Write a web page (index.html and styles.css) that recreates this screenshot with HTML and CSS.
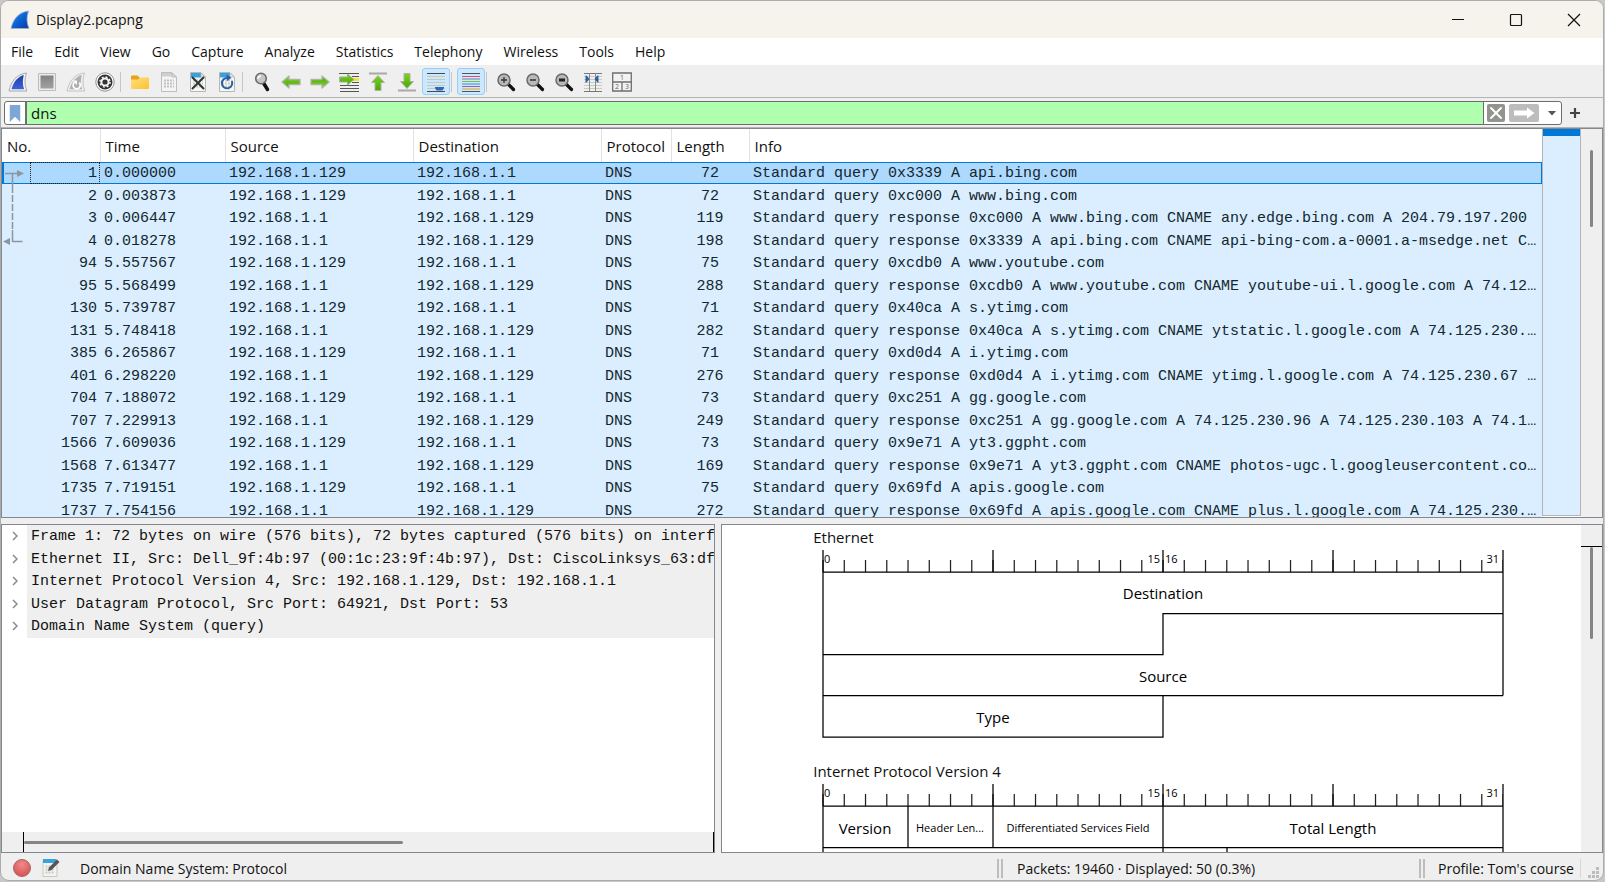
FILE: index.html
```html
<!DOCTYPE html>
<html lang="en">
<head>
  <meta charset="UTF-8" />
  <meta name="viewport" content="width=device-width, initial-scale=1" />
  <title>Display2.pcapng</title>
  <link rel="stylesheet" href="styles.css">
</head>
<body>

<!-- shared icon parts -->
<svg class="defs" aria-hidden="true">
  <defs>
    <linearGradient id="fin-blue" x1="0" y1="0" x2="1" y2="1">
      <stop offset="0" stop-color="#2a9bf2" />
      <stop offset="0.5" stop-color="#0a62d6" />
      <stop offset="1" stop-color="#083a9c" />
    </linearGradient>
    <linearGradient id="fin-navy" x1="0" y1="0" x2="0" y2="1">
      <stop offset="0" stop-color="#1d3fa8" />
      <stop offset="1" stop-color="#3f63d8" />
    </linearGradient>
    <linearGradient id="green" x1="0" y1="0" x2="0" y2="1">
      <stop offset="0" stop-color="#7ed321" />
      <stop offset="1" stop-color="#4aa505" />
    </linearGradient>
    <linearGradient id="yellow" x1="0" y1="0" x2="1" y2="1">
      <stop offset="0" stop-color="#ffdf83" />
      <stop offset="1" stop-color="#fcc22d" />
    </linearGradient>
    <linearGradient id="gray" x1="0" y1="0" x2="0" y2="1">
      <stop offset="0" stop-color="#828282" />
      <stop offset="1" stop-color="#a2a2a2" />
    </linearGradient>
    <radialGradient id="red" cx="0.5" cy="0.3" r="0.7">
      <stop offset="0" stop-color="#f08a8a" />
      <stop offset="1" stop-color="#d94f4f" />
    </radialGradient>
    <symbol id="page" viewBox="0 0 20 20">
      <path d="M2.500.5h10.500l4.500 4.500v14.500h-15z" fill="#f7f7f2" stroke="#b4b8b4" />
      <path d="M3 1h10v4.500H3z" fill="#36a3de" />
      <path d="M13 1v4h4z" fill="#e4e6e2" stroke="#b4b8b4" stroke-width=".7" />
      <path d="M5 8.500h10M5 11.500h10M5 14.500h10" stroke="#c9ccc9" stroke-width="2" stroke-dasharray="2 1" />
    </symbol>
    <symbol id="lens" viewBox="0 0 20 20">
      <path d="M12 12l5.500 5.500" stroke="#111" stroke-width="3.200" stroke-linecap="round" />
      <circle cx="8" cy="8" r="6" fill="#b9b9b9" stroke="#6a6a6a" stroke-width="1.500" />
    </symbol>
    <symbol id="arrow" viewBox="0 0 20 20">
      <path d="M1 10l7-6v3.500h11v5H8V16z" fill="url(#green)" stroke="#aab6a2" stroke-width="1.300" stroke-linejoin="round" />
    </symbol>
  </defs>
</svg>

<div class="window">
  <header class="titlebar">
    <svg class="app-icon" viewBox="0 0 20 20"><path d="M1 18.500C3 9 9 2 18.500 1c-2 6-2 11.500.5 17.500z" fill="url(#fin-blue)" stroke="#9fb4c8" stroke-width=".8" /></svg>
    <h1 class="title">Display2.pcapng</h1>
    <div class="window-buttons">
      <button aria-label="Minimize"><svg viewBox="0 0 14 14"><path d="M1 6.500h12" /></svg></button>
      <button aria-label="Maximize"><svg viewBox="0 0 14 14"><rect x="1.500" y="1.500" width="11" height="11" rx="1" /></svg></button>
      <button aria-label="Close"><svg viewBox="0 0 14 14"><path d="M1 1l12 12M13 1L1 13" /></svg></button>
    </div>
  </header>

  <nav class="menubar">
    <button>File</button>
    <button>Edit</button>
    <button>View</button>
    <button>Go</button>
    <button>Capture</button>
    <button>Analyze</button>
    <button>Statistics</button>
    <button>Telephony</button>
    <button>Wireless</button>
    <button>Tools</button>
    <button>Help</button>
  </nav>

  <div class="toolbar">
    <button aria-label="Start capture"><svg viewBox="0 0 20 20"><path d="M1 19C3 9 9 2 18.500 1c-2 6-2 12 .3 18z" fill="#f4f4f4" stroke="#a9a9a9" /><path d="M3.500 17.300C5.500 10 9.500 4.800 15.800 3c-1.300 5-1.300 9.500.3 14.300z" fill="url(#fin-navy)" /></svg></button>
    <button aria-label="Stop capture"><svg viewBox="0 0 20 20"><path d="M1.500 1.500h17v17h-17z" fill="#ececec" stroke="#bcbcbc" /><path d="M3.500 3.500h13v13h-13z" fill="url(#gray)" /></svg></button>
    <button aria-label="Restart capture"><svg viewBox="0 0 20 20"><path d="M1 19C3 9 9 2 18.500 1c-2 6-2 12 .3 18z" fill="#efefef" stroke="#c3c3c3" /><path d="M3.500 17.300C5.500 10 9.500 4.800 15.800 3c-1.300 5-1.300 9.500.3 14.300z" fill="#b0b0b0" /><path d="M8.300 10.500a3.600 3.600 0 1 0 5 .2" fill="none" stroke="#fff" stroke-width="1.700" /><path d="M6.500 8.500h4.500V13z" fill="#fff" /></svg></button>
    <button aria-label="Capture options"><svg viewBox="0 0 20 20"><circle cx="10" cy="10" r="9.200" fill="#fff" stroke="#8c8c8c" /><circle cx="10" cy="10" r="7.500" fill="#333" /><circle cx="10" cy="10" r="3.600" fill="none" stroke="#f4f4f4" stroke-width="2" /><circle cx="10" cy="10" r="5.100" fill="none" stroke="#f4f4f4" stroke-width="1.400" stroke-dasharray="2 2" /></svg></button>
    <span class="sep"></span>
    <button aria-label="Open file"><svg viewBox="0 0 20 20"><path d="M1 4.500q0-1 1-1h5.500l2 2V9H1z" fill="#e8a21c" /><path d="M1 7.500h7l2-2h8q1 0 1 1V16q0 1-1 1H2q-1 0-1-1z" fill="url(#yellow)" /></svg></button>
    <button aria-label="Save file"><svg viewBox="0 0 20 20"><path d="M2.500.5h10.500l4.500 4.500v14.500h-15z" fill="#f4f4f4" stroke="#bdbdbd" /><path d="M3 1h10v3.500H3z" fill="#cfcfcf" /><path d="M13 1v4h4z" fill="#ddd" stroke="#bdbdbd" /><path d="M5 8.500h10M5 11.500h10M5 14.500h10" stroke="#c2c2c2" stroke-width="2" stroke-dasharray="2 1" /></svg></button>
    <button aria-label="Close file"><svg viewBox="0 0 20 20"><use href="#page" /><path d="M4.500 5.500l11 11M15.500 5.500l-11 11" stroke="#2d3436" stroke-width="2" stroke-linecap="round" /></svg></button>
    <button aria-label="Reload file"><svg viewBox="0 0 20 20"><use href="#page" /><path d="M14.800 9a5.200 5.200 0 1 1-4-3" fill="none" stroke="#2c5fa5" stroke-width="2" /><path d="M9.500 2.500l5 3.300-4.500 3.500z" fill="#2c5fa5" /></svg></button>
    <span class="sep"></span>
    <button aria-label="Find packet"><svg viewBox="0 0 20 20"><path d="M11.500 11l4 6.500" stroke="#111" stroke-width="3.500" stroke-linecap="round" /><circle cx="9" cy="6.500" r="5.300" fill="#c6c6c6" stroke="#6d6d6d" stroke-width="1.600" /><path d="M6 7a3 3 0 0 1 3-3" fill="none" stroke="#fff" stroke-width="1.300" /></svg></button>
    <button aria-label="Previous packet"><svg viewBox="0 0 20 20"><use href="#arrow" /></svg></button>
    <button aria-label="Next packet"><svg viewBox="0 0 20 20"><use href="#arrow" transform="rotate(180 10 10)" /></svg></button>
    <button aria-label="Go to packet"><svg viewBox="0 0 20 20"><path d="M0 1.500h20M1 13.500h19M1 16.500h19M1 19.500h19" stroke="#555" /><path d="M13 4.500h7M13 10.500h7" stroke="#555" /><path d="M13 7.500h7" stroke="#f4e23c" stroke-width="3" /><path d="M15 7.500L8.500 2v3H.7v5h7.800v3z" fill="url(#green)" stroke="#9fb08f" /></svg></button>
    <button aria-label="First packet"><svg viewBox="0 0 20 20"><path d="M1 1.500h18" stroke="#a9a9a9" stroke-width="2" /><path d="M10 3.500l6.500 7H13v8H7v-8H3.500z" fill="url(#green)" stroke="#a9b59f" /></svg></button>
    <button aria-label="Last packet"><svg viewBox="0 0 20 20"><path d="M1 18.500h18" stroke="#a9a9a9" stroke-width="2" /><path d="M10 16.500l6.500-7H13v-8H7v8H3.500z" fill="url(#green)" stroke="#a9b59f" /></svg></button>
    <button class="active" aria-label="Auto scroll"><svg viewBox="0 0 20 20"><path d="M1 1.500h18M1 19.500h18" stroke="#4a4a4a" /><path d="M1 4.500h18M1 7.500h18M1 10.500h18M1 13.500h18M1 16.500h18" stroke="#c2c8bb" /><path d="M9 15h9v1l-1.500 2.500h-6L9 16z" fill="#2f66b5" /></svg></button>
    <span class="sep"></span>
    <button class="active" aria-label="Colorize packets"><svg viewBox="0 0 20 20"><path d="M1 1.500h18M1 19.500h18" stroke="#555" /><path d="M1 4.500h18" stroke="#f04c4c" /><path d="M1 7h18" stroke="#5b83c4" /><path d="M1 9.500h18" stroke="#76c442" /><path d="M1 12h18" stroke="#5b83c4" /><path d="M1 14.500h18" stroke="#8a6ba8" /><path d="M1 17h18" stroke="#d9a92a" /></svg></button>
    <span class="sep"></span>
    <button aria-label="Zoom in"><svg viewBox="0 0 20 20"><use href="#lens" /><path d="M5 8h6M8 5v6" stroke="#333" stroke-width="1.300" /></svg></button>
    <button aria-label="Zoom out"><svg viewBox="0 0 20 20"><use href="#lens" /><path d="M5 8h6" stroke="#333" stroke-width="1.300" /></svg></button>
    <button aria-label="Normal size"><svg viewBox="0 0 20 20"><use href="#lens" /><path d="M5 8h6" stroke="#222" stroke-width="2.800" /></svg></button>
    <button aria-label="Resize columns"><svg viewBox="0 0 20 20"><path d="M1 1.500h18M1 19.500h18" stroke="#777" /><path d="M1 4.500h18M1 7.500h18M1 10.500h18M1 13.500h18M1 16.500h18" stroke="#c6ccc0" /><path d="M6.500 1v18M12.500 1v18" stroke="#8c8c8c" /><path d="M2.500 3.500h1l3 3.500-3 3.500h-1zM15.500 3.500h-1l-3 3.500 3 3.500h1z" fill="#2b5fae" /></svg></button>
    <button aria-label="Pane layout"><svg viewBox="0 0 20 20"><path d="M.7 1h18.600v18H.7zM.7 10h18.600M10 10v9" fill="#f2f2f2" stroke="#6e6e6e" stroke-width="1.300" /><text x="10" y="8" class="tiny">1</text><text x="5" y="17" class="tiny">2</text><text x="15" y="17" class="tiny">3</text></svg></button>
  </div>

  <div class="filterbar">
    <div class="filter">
      <button class="bookmark" aria-label="Saved filters"><svg viewBox="0 0 12 20"><path d="M.5 1h11v18L6 13.500.5 19z" fill="#7ea6d6" /></svg></button>
      <input type="text" value="dns" aria-label="Display filter">
      <button class="clear" aria-label="Clear filter"><svg viewBox="0 0 18 18"><path d="M4 4l10 10M14 4L4 14" stroke="#fff" stroke-width="2" stroke-linecap="round" /></svg></button>
      <button class="apply" aria-label="Apply filter"><svg viewBox="0 0 30 18"><path d="M5 6.500h13V3.500l7.500 5.500-7.500 5.500v-3H5z" fill="#fff" /></svg></button>
      <button class="history" aria-label="Recent filters"><svg viewBox="0 0 8 5"><path d="M0 0h8L4 4.500z" fill="#555" /></svg></button>
    </div>
    <button class="add" aria-label="Add filter button"><svg viewBox="0 0 10 10"><path d="M5 0v10M0 5h10" stroke="#444" stroke-width="2.200" /></svg></button>
  </div>

  <main class="panes">
    <section class="pane packet-list">
      <div class="packets">
        <table>
          <colgroup>
            <col class="c-no"><col class="c-time"><col class="c-addr"><col class="c-addr"><col class="c-proto"><col class="c-len"><col>
          </colgroup>
          <thead>
            <tr><th>No.</th><th>Time</th><th>Source</th><th>Destination</th><th>Protocol</th><th>Length</th><th>Info</th></tr>
          </thead>
          <tbody>
            <tr class="selected"><td>1</td><td>0.000000</td><td>192.168.1.129</td><td>192.168.1.1</td><td>DNS</td><td>72</td><td>Standard query 0x3339 A api.bing.com</td></tr>
            <tr><td>2</td><td>0.003873</td><td>192.168.1.129</td><td>192.168.1.1</td><td>DNS</td><td>72</td><td>Standard query 0xc000 A www.bing.com</td></tr>
            <tr><td>3</td><td>0.006447</td><td>192.168.1.1</td><td>192.168.1.129</td><td>DNS</td><td>119</td><td>Standard query response 0xc000 A www.bing.com CNAME any.edge.bing.com A 204.79.197.200</td></tr>
            <tr><td>4</td><td>0.018278</td><td>192.168.1.1</td><td>192.168.1.129</td><td>DNS</td><td>198</td><td>Standard query response 0x3339 A api.bing.com CNAME api-bing-com.a-0001.a-msedge.net C…</td></tr>
            <tr><td>94</td><td>5.557567</td><td>192.168.1.129</td><td>192.168.1.1</td><td>DNS</td><td>75</td><td>Standard query 0xcdb0 A www.youtube.com</td></tr>
            <tr><td>95</td><td>5.568499</td><td>192.168.1.1</td><td>192.168.1.129</td><td>DNS</td><td>288</td><td>Standard query response 0xcdb0 A www.youtube.com CNAME youtube-ui.l.google.com A 74.12…</td></tr>
            <tr><td>130</td><td>5.739787</td><td>192.168.1.129</td><td>192.168.1.1</td><td>DNS</td><td>71</td><td>Standard query 0x40ca A s.ytimg.com</td></tr>
            <tr><td>131</td><td>5.748418</td><td>192.168.1.1</td><td>192.168.1.129</td><td>DNS</td><td>282</td><td>Standard query response 0x40ca A s.ytimg.com CNAME ytstatic.l.google.com A 74.125.230.…</td></tr>
            <tr><td>385</td><td>6.265867</td><td>192.168.1.129</td><td>192.168.1.1</td><td>DNS</td><td>71</td><td>Standard query 0xd0d4 A i.ytimg.com</td></tr>
            <tr><td>401</td><td>6.298220</td><td>192.168.1.1</td><td>192.168.1.129</td><td>DNS</td><td>276</td><td>Standard query response 0xd0d4 A i.ytimg.com CNAME ytimg.l.google.com A 74.125.230.67 …</td></tr>
            <tr><td>704</td><td>7.188072</td><td>192.168.1.129</td><td>192.168.1.1</td><td>DNS</td><td>73</td><td>Standard query 0xc251 A gg.google.com</td></tr>
            <tr><td>707</td><td>7.229913</td><td>192.168.1.1</td><td>192.168.1.129</td><td>DNS</td><td>249</td><td>Standard query response 0xc251 A gg.google.com A 74.125.230.96 A 74.125.230.103 A 74.1…</td></tr>
            <tr><td>1566</td><td>7.609036</td><td>192.168.1.129</td><td>192.168.1.1</td><td>DNS</td><td>73</td><td>Standard query 0x9e71 A yt3.ggpht.com</td></tr>
            <tr><td>1568</td><td>7.613477</td><td>192.168.1.1</td><td>192.168.1.129</td><td>DNS</td><td>169</td><td>Standard query response 0x9e71 A yt3.ggpht.com CNAME photos-ugc.l.googleusercontent.co…</td></tr>
            <tr><td>1735</td><td>7.719151</td><td>192.168.1.129</td><td>192.168.1.1</td><td>DNS</td><td>75</td><td>Standard query 0x69fd A apis.google.com</td></tr>
            <tr><td>1737</td><td>7.754156</td><td>192.168.1.1</td><td>192.168.1.129</td><td>DNS</td><td>272</td><td>Standard query response 0x69fd A apis.google.com CNAME plus.l.google.com A 74.125.230.…</td></tr>
          </tbody>
        </table>
        <!-- links the selected query to its response -->
        <svg class="related" viewBox="0 0 24 80">
          <path d="M3 5.500h13M10.500 73.500h10M10.500 5v13M10.500 62v12" />
          <path d="M10.500 18v44" stroke-dasharray="7 2" />
          <path class="head" d="M15 2l7 3.500-7 3.500zM8 70l-7 3.500 7 3.500z" />
        </svg>
      </div>
      <div class="minimap"><div class="minimap-mark"></div></div>
      <div class="vscroll list-scroll"><div class="thumb"></div></div>
    </section>

    <div class="lower">
      <section class="pane details">
        <ul class="tree">
          <li><button><svg viewBox="0 0 6 10"><path d="M1 1l4 4-4 4" /></svg><span>Frame 1: 72 bytes on wire (576 bits), 72 bytes captured (576 bits) on interfa</span></button></li>
          <li><button><svg viewBox="0 0 6 10"><path d="M1 1l4 4-4 4" /></svg><span>Ethernet II, Src: Dell_9f:4b:97 (00:1c:23:9f:4b:97), Dst: CiscoLinksys_63:df:</span></button></li>
          <li><button><svg viewBox="0 0 6 10"><path d="M1 1l4 4-4 4" /></svg><span>Internet Protocol Version 4, Src: 192.168.1.129, Dst: 192.168.1.1</span></button></li>
          <li><button><svg viewBox="0 0 6 10"><path d="M1 1l4 4-4 4" /></svg><span>User Datagram Protocol, Src Port: 64921, Dst Port: 53</span></button></li>
          <li><button><svg viewBox="0 0 6 10"><path d="M1 1l4 4-4 4" /></svg><span>Domain Name System (query)</span></button></li>
        </ul>
        <div class="hscroll"><div class="track"><div class="thumb"></div></div></div>
      </section>

      <section class="pane diagram">
        <div class="canvas">
          <h2>Ethernet</h2>
          <svg class="ethernet" viewBox="0 0 682 190" width="682" height="190">
            <path class="ticks" d="M.4 16H681" />
            <path class="line" d="M1 0v187h340v-41M1 22h680v123.500M1 104.500h340V63.500h340M1 145.500h680M171 0v22M341 0v22M511 0v22M681 0v22" />
            <g class="bit"><text x="2" y="13">0</text><text x="338" y="13" class="end">15</text><text x="343" y="13">16</text><text x="677" y="13" class="end">31</text></g>
            <g class="field"><text x="341" y="49">Destination</text><text x="341" y="132">Source</text><text x="171" y="173">Type</text></g>
          </svg>
          <h2>Internet Protocol Version 4</h2>
          <svg class="ipv4" viewBox="0 0 682 120" width="682" height="120">
            <path class="ticks" d="M.4 16H681" />
            <path class="line" d="M1 0v120M1 22h680M681 0v120M1 63.500h680M86 22v41M171 0v63M341 0v120M511 0v22M405 63v57" />
            <g class="bit"><text x="2" y="13">0</text><text x="338" y="13" class="end">15</text><text x="343" y="13">16</text><text x="677" y="13" class="end">31</text></g>
            <g class="field"><text x="43" y="50">Version</text><text x="511" y="50">Total Length</text></g>
            <g class="field small"><text x="128" y="48">Header Len...</text><text x="256" y="48">Differentiated Services Field</text></g>
          </svg>
        </div>
        <div class="vscroll diagram-scroll"><div class="thumb"></div></div>
      </section>
    </div>
  </main>

  <footer class="statusbar">
    <div class="status-info">
      <button aria-label="Expert information"><svg viewBox="0 0 20 20"><circle cx="10" cy="10" r="8.500" fill="url(#red)" stroke="#a06a6a" /></svg></button>
      <button aria-label="Capture file comment"><svg viewBox="0 0 20 20"><path d="M2 1.500h14v17H2z" fill="#f3f4ef" stroke="#c5c8c3" /><path d="M2 1h13v4H2z" fill="#36a3de" /><path d="M4.500 8.500h9M4.500 11.500h9M4.500 14.500h9" stroke="#c9ccc9" stroke-width="2" stroke-dasharray="2 1" /><path d="M7 13l1-3.500 8-8 2.500 2.500-8 8z" fill="#555" /></svg></button>
      <span class="status-text">Domain Name System: Protocol</span>
    </div>
    <div class="status-packets">Packets: 19460 · Displayed: 50 (0.3%)</div>
    <div class="status-profile">Profile: Tom's course</div>
    <svg class="grip" viewBox="0 0 12 12"><path d="M8 0h3v3H8zM4 4h3v3H4zM8 4h3v3H8zM0 8h3v3H0zM4 8h3v3H4zM8 8h3v3H8z" fill="#bcbcbc" /></svg>
  </footer>
</div>

</body>
</html>
```

FILE: styles.css
```css
* {
  box-sizing: border-box;
}
body {
  margin: 0;
  height: 100vh;
  padding: 0 1px 1px 0;
  background: #c8c8c8;
  color: #111;
  font-family: "Open Sans", "Segoe UI", sans-serif;
  font-size: 15px;
}
h1, h2, ul {
  margin: 0;
  padding: 0;
  font-size: 15px;
  font-weight: 400;
}
button {
  border: none;
  padding: 0;
  background: none;
  color: inherit;
  font: inherit;
}
svg {
  display: block;
  flex: none;
}
.defs {
  position: absolute;
  width: 0;
  height: 0;
}

.window {
  display: flex;
  flex-direction: column;
  height: 100%;
  overflow: hidden;
  background: #efefef;
  border: 1px solid #acacac;
  border-radius: 9px;
}

/* title bar */
.titlebar {
  display: flex;
  align-items: center;
  flex: none;
  height: 37px;
  padding-left: 9px;
  background: #f6f2ec;
}
.app-icon {
  width: 20px;
  height: 20px;
}
.title {
  flex: 1;
  margin-left: 6px;
  font-size: 14px;
}
.window-buttons {
  display: flex;
  height: 100%;
}
.window-buttons button {
  display: grid;
  place-items: center;
  width: 58px;
}
.window-buttons svg {
  width: 14px;
  height: 14px;
  fill: none;
  stroke: #111;
  stroke-width: 1.2;
}

.menubar {
  display: flex;
  flex: none;
  height: 27px;
  background: #fff;
}
.menubar button {
  padding: 0 11px 0 10px;
  font-size: 14px;
}

/* toolbar */
.toolbar {
  display: flex;
  align-items: center;
  flex: none;
  gap: 1px;
  height: 33px;
  padding: 1px 3px 0;
  border-bottom: 1px solid #b4b4b4;
}
.toolbar button {
  display: grid;
  place-items: center;
  width: 28px;
  height: 27px;
}
.toolbar svg {
  width: 20px;
  height: 20px;
}
.toolbar .active {
  background: #cce8ff;
  border: 1px solid #99cdf8;
  border-radius: 3px;
}
.sep {
  width: 5px;
  height: 20px;
  border-left: 1px solid #c6c6c6;
}
.tiny {
  font-size: 7px;
  text-anchor: middle;
  fill: #666;
}

/* display filter */
.filterbar {
  display: flex;
  align-items: center;
  flex: none;
  height: 30px;
  padding: 1px 23px 0 3px;
  border-bottom: 1px solid #b4b4b4;
}
.filter {
  display: flex;
  align-items: center;
  flex: 1;
  height: 24px;
  background: #fff;
  border: 1px solid #6e6e6e;
  border-radius: 3px;
}
.bookmark {
  display: grid;
  place-items: center;
  width: 20px;
}
.bookmark svg {
  width: 12px;
  height: 19px;
}
.filter input {
  flex: 1;
  min-width: 0;
  height: 100%;
  padding: 0 4px;
  background: #afffaf;
  border: solid #6e6e6e;
  border-width: 0 1px 0 2px;
  outline: none;
  color: #111;
  font: inherit;
}
.clear {
  width: 18px;
  height: 18px;
  margin-left: 3px;
  background: #92948f;
  border-radius: 2px;
}
.apply {
  width: 30px;
  height: 18px;
  margin-left: 4px;
  background: #bdbdbd;
  border-radius: 2px;
}
.history {
  display: grid;
  place-items: center;
  width: 22px;
  padding-left: 4px;
}
.history svg {
  width: 8px;
  height: 5px;
}
.add {
  margin-left: 8px;
}
.add svg {
  width: 10px;
  height: 10px;
}

/* panes */
.panes {
  display: flex;
  flex-direction: column;
  flex: 1;
  gap: 6px;
  min-height: 0;
}
.pane {
  display: flex;
  min-width: 0;
  overflow: hidden;
  background: #fff;
  border: 1px solid #828790;
}
.packet-list {
  flex: 389 1 0;
}
.packets {
  position: relative;
  flex: 1;
  min-width: 0;
  overflow: hidden;
  background: #daeeff;
}
table {
  width: 100%;
  table-layout: fixed;
  border-collapse: collapse;
}
.c-no { width: 98px; }
.c-time { width: 125px; }
.c-addr { width: 188px; }
.c-proto { width: 70px; }
.c-len { width: 78px; }
thead tr {
  height: 33px;
  background: #fff;
}
th {
  padding: 0 0 0 5px;
  border-right: 1px solid #e2e2e2;
  text-align: left;
  font-size: 15px;
  font-weight: 400;
}
th:last-child {
  border-right: none;
}
td {
  height: 22px;
  padding: 2px 0 0 4px;
  color: #12272e;
  font-family: "Liberation Mono", Consolas, monospace;
  font-size: 15px;
  line-height: 20px;
  white-space: nowrap;
}
tr:nth-child(even) td {
  height: 23px;
}
td:first-child {
  padding: 2px 3px 0 0;
  text-align: right;
}
td:nth-child(6) {
  padding: 2px 0 0;
  text-align: center;
}
.selected {
  background: #aed9ff;
  outline: 1px solid #0078d7;
  outline-offset: -1px;
}
.selected td:first-child {
  position: relative;
  background: linear-gradient(#0078d7, #0078d7) 0 0 / 2px 100% no-repeat;
}
/* focus box of the current cell */
.selected td:first-child::after {
  content: "";
  position: absolute;
  inset: 0 0 0 28px;
  border: 1px dotted #222;
}
.related {
  position: absolute;
  top: 39px;
  left: 0;
  width: 24px;
  height: 80px;
  fill: none;
  stroke: #8b979e;
  stroke-width: 1.5;
}
.related .head {
  fill: #8b979e;
  stroke: none;
}
.minimap {
  width: 39px;
  margin-bottom: 1px;
  background: #daeeff;
  border: solid #b4b4b4;
  border-width: 0 1px 1px;
}
.minimap-mark {
  height: 7px;
  background: #0078d7;
}

.vscroll {
  flex: none;
  width: 21px;
  background: #efefef;
}
.vscroll .thumb {
  width: 3px;
  margin: 0 auto;
  background: #858585;
  border-radius: 2px;
}
.list-scroll {
  padding-top: 21px;
}
.list-scroll .thumb {
  height: 77px;
}
.diagram-scroll {
  padding-top: 21px;
}
.diagram-scroll .thumb {
  height: 92px;
}
.diagram-scroll::before {
  content: "";
  display: block;
  height: 1px;
  background: #000;
}

.lower {
  display: flex;
  flex: 330 1 0;
  gap: 6px;
  min-height: 0;
}
.details {
  flex: 714 1 0;
  flex-direction: column;
}
.tree {
  flex: 1;
  list-style: none;
}
.tree button {
  display: flex;
  align-items: center;
  width: 100%;
  height: 22px;
  padding-left: 10px;
  overflow: hidden;
  font-family: "Liberation Mono", Consolas, monospace;
  font-size: 15px;
  line-height: 24px;
  text-align: left;
  white-space: nowrap;
}
.tree li:nth-child(odd) button {
  height: 23px;
}
.tree svg {
  width: 6px;
  height: 10px;
  margin-right: 9px;
  fill: none;
  stroke: #8a8a8a;
  stroke-width: 1.5;
}
.tree span {
  flex: 1 0 auto;
  height: 100%;
  padding-left: 4px;
  background: #efefef;
}
.hscroll {
  height: 20px;
  padding-left: 21px;
  background: #efefef;
}
.track {
  display: flex;
  align-items: center;
  height: 100%;
  border: solid #000;
  border-width: 0 1px;
}
.hscroll .thumb {
  width: 55%;
  height: 3px;
  background: #858585;
  border-radius: 2px;
}

/* packet diagram */
.diagram {
  flex: 882 1 0;
}
.canvas {
  flex: 1;
  min-width: 0;
  padding-left: 91px;
  overflow: hidden;
}
.canvas h2 {
  height: 25px;
  line-height: 24px;
}
.canvas svg {
  margin-left: 9px;
}
.ethernet {
  margin-bottom: 19px;
}
.line {
  fill: none;
  stroke: #000;
  stroke-width: 1.25;
}
.ticks {
  fill: none;
  stroke: #222;
  stroke-width: 12;
  stroke-dasharray: 1.25 20;
}
.field {
  font-size: 15px;
  text-anchor: middle;
}
.small {
  font-size: 11px;
}
.bit {
  font-size: 11px;
}
.end {
  text-anchor: end;
}

/* status bar */
.statusbar {
  display: flex;
  align-items: center;
  flex: none;
  height: 27px;
  padding-top: 3px;
  font-size: 14px;
}
.status-info {
  display: flex;
  align-items: center;
  flex: 1;
  gap: 9px;
  padding-left: 11px;
}
.status-info svg {
  width: 20px;
  height: 20px;
}
.status-text {
  margin-left: 10px;
}
.status-packets {
  flex: 0 1 422px;
  padding-left: 14px;
  border-left: 6px double #bdbdbd;
}
.status-profile {
  flex: 0 1 162px;
  padding-left: 13px;
  border-left: 6px double #bdbdbd;
  border-right: 1px solid #d8d8d8;
}
.grip {
  align-self: flex-end;
  width: 12px;
  height: 12px;
  margin: 0 3px 1px 7px;
}
```
